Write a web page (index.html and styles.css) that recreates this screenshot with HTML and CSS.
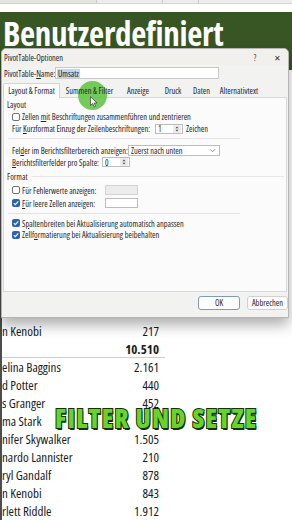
FILE: index.html
```html
<!DOCTYPE html>
<html lang="de">
<head>
<meta charset="utf-8">
<title>PivotTable-Optionen</title>
<link rel="stylesheet" href="styles.css">
</head>
<body>
<div class="screen">
  <div class="colheads">
    <span class="ch ch-a"></span><span class="ch ch-b"></span><span class="ch ch-c"></span><span class="ch ch-d"></span>
  </div>
  <div class="banner"><h1 class="banner-title">Benutzerdefiniert</h1></div>

  <div class="rows">
    <div class="row"><span class="name">n Kenobi</span><span class="num">217</span></div>
    <div class="row total"><span class="name"></span><span class="num">10.510</span></div>
    <div class="row"><span class="name">elina Baggins</span><span class="num">2.161</span></div>
    <div class="row"><span class="name">d Potter</span><span class="num">440</span></div>
    <div class="row"><span class="name">s Granger</span><span class="num">452</span></div>
    <div class="row"><span class="name">ma Stark</span><span class="num"></span></div>
    <div class="row"><span class="name">nifer Skywalker</span><span class="num">1.505</span></div>
    <div class="row"><span class="name">nardo Lannister</span><span class="num">210</span></div>
    <div class="row"><span class="name">ryl Gandalf</span><span class="num">878</span></div>
    <div class="row"><span class="name">n Kenobi</span><span class="num">843</span></div>
    <div class="row"><span class="name">rlett Riddle</span><span class="num">1.912</span></div>
  </div>

  <div class="dialog">
    <div class="titlebar">
      <span class="title">PivotTable-Optionen</span>
      <span class="tb-btn">?</span>
      <span class="tb-btn close">✕</span>
    </div>
    <div class="name-row">
      <span class="name-label">PivotTable-<u>N</u>ame:</span>
      <span class="name-input"><span class="sel">Umsatz</span></span>
    </div>
    <div class="tabs">
      <span class="tab active t1">Layout &amp; Format</span>
      <span class="tab t2">Summen &amp; Filter</span>
      <span class="tab t3">Anzeige</span>
      <span class="tab t4">Druck</span>
      <span class="tab t5">Daten</span>
      <span class="tab t6">Alternativtext</span>
    </div>
    <div class="panel">
      <div class="heading">Layout</div>
      <div class="line cb-row r-merge">
        <span class="cb"></span><span>Zellen <u>m</u>it Beschriftungen zusammenführen und zentrieren</span>
      </div>
      <div class="line r-indent">
        <span class="txt w-indent">Für <u>K</u>urzformat Einzug der Zeilenbeschriftungen:</span>
        <span class="spin"><span class="spin-val">1</span><span class="spin-arrows"><svg viewBox="0 0 8 10" width="8" height="10"><path d="M2 4 L4 2 L6 4 Z M2 6 L4 8 L6 6 Z" fill="#555"/></svg></span></span>
        <span class="after">Zeichen</span>
      </div>
      <div class="sep short s1"></div>
      <div class="line r-felder">
        <span class="txt w-felder">Fel<u>d</u>er im Berichtsfilterbereich anzeigen:</span>
        <span class="select"><span>Zuerst nach unten</span><svg viewBox="0 0 8 6" width="7" height="5"><path d="M1 1.5 L4 4.5 L7 1.5" stroke="#666" stroke-width="0.9" fill="none"/></svg></span>
      </div>
      <div class="line r-bericht">
        <span class="txt w-bericht"><u>B</u>erichtsfilterfelder pro Spalte:</span>
        <span class="spin"><span class="spin-val">0</span><span class="spin-arrows"><svg viewBox="0 0 8 10" width="8" height="10"><path d="M2 4 L4 2 L6 4 Z M2 6 L4 8 L6 6 Z" fill="#555"/></svg></span></span>
      </div>
      <div class="heading fmt"><span>Format</span><span class="hline"></span></div>
      <div class="line cb-row r-fehler">
        <span class="lab w-fmt"><span class="cb"></span><span>Für Fehlerwerte anzei<u>g</u>en:</span></span>
        <span class="field disabled"></span>
      </div>
      <div class="line cb-row r-leer">
        <span class="lab w-fmt"><span class="cb on"><svg viewBox="0 0 8 8" width="8" height="8"><path d="M1.8 4.1 L3.3 5.6 L6.3 2.4" stroke="#fff" stroke-width="1.1" fill="none"/></svg></span><span><u>F</u>ür leere Zellen anzeigen:</span></span>
        <span class="field"></span>
      </div>
      <div class="sep short s3"></div>
      <div class="line cb-row r-spalt">
        <span class="cb on"><svg viewBox="0 0 8 8" width="8" height="8"><path d="M1.8 4.1 L3.3 5.6 L6.3 2.4" stroke="#fff" stroke-width="1.1" fill="none"/></svg></span><span>S<u>p</u>altenbreiten bei Aktualisierung automatisch anpassen</span>
      </div>
      <div class="line cb-row r-zell">
        <span class="cb on"><svg viewBox="0 0 8 8" width="8" height="8"><path d="M1.8 4.1 L3.3 5.6 L6.3 2.4" stroke="#fff" stroke-width="1.1" fill="none"/></svg></span><span>Zellf<u>o</u>rmatierung bei Aktualisierung beibehalten</span>
      </div>
    </div>
    <div class="buttons">
      <span class="btn default">OK</span>
      <span class="btn">Abbrechen</span>
    </div>
  </div>

  <div class="cursor-dot"></div>
  <svg class="pointer" viewBox="0 0 9 13" width="8" height="12"><path d="M0.5 0.5 L0.5 10.5 L3 8.2 L4.8 12 L6.3 11.3 L4.6 7.6 L8 7.6 Z" fill="#fff" stroke="#333" stroke-width="0.8" stroke-linejoin="round"/></svg>

  <div class="caption">FILTER UND SETZE</div>
</div>
</body>
</html>
```

FILE: styles.css
```css
html, body {
  margin: 0;
  padding: 0;
  background: #ffffff;
}

.screen {
  position: relative;
  width: 292px;
  height: 520px;
  overflow: hidden;
  background: #ffffff;
  font-family: "Open Sans", "Noto Sans", sans-serif;
}

/* spreadsheet background */
.colheads {
  display: flex;
  height: 4px;
  margin-bottom: 8px;
  background: #ededed;
  border-bottom: 1px solid #d6d6d6;
  box-sizing: border-box;
}
.ch {
  border-right: 1px solid #c9c9c9;
  height: 100%;
}
.ch-a { width: 96px; background: #e2e6df; }
.ch-b { width: 65px; }
.ch-c { width: 35px; }
.ch-d { flex: 1; border-right: none; }

.banner {
  height: 58px;
  background: #375623;
  overflow: hidden;
}
.banner-title {
  margin: 0;
  padding: 2px 0 0 3px;
  color: #ffffff;
  font-family: "Open Sans", sans-serif;
  font-weight: 700;
  font-size: 33px;
  font-stretch: 75%;
  line-height: 40px;
  letter-spacing: -0.3px;
  white-space: nowrap;
}

.rows {
  padding-top: 252px;
  border-left: 2px solid #4d4d4d;
}
.row {
  display: grid;
  grid-template-columns: 105px 52px;
  width: 163px;
  height: 18px;
  align-items: center;
  box-sizing: border-box;
  font-size: 13px;
  font-stretch: 75%;
  color: #1b1b1b;
  white-space: nowrap;
}
.row .num {
  text-align: right;
}
.row.total {
  border-bottom: 1px solid #bcd2ea;
  font-weight: 700;
}

/* dialog */
.dialog {
  position: absolute;
  left: 1px;
  top: 48px;
  width: 288px;
  height: 270px;
  box-sizing: border-box;
  background: #f2f2f1;
  border: 1px solid #b4b4b4;
  border-radius: 5px 5px 0 0;
  box-shadow: 0 7px 14px rgba(0, 0, 0, 0.32);
  font-size: 8.4px;
  font-stretch: 75%;
  color: #262626;
  white-space: nowrap;
  display: flex;
  flex-direction: column;
}
.titlebar {
  display: flex;
  align-items: center;
  height: 16px;
  padding-left: 2px;
  background: #f1f0ec;
  border-radius: 5px 5px 0 0;
}
.title {
  flex: 1;
}
.tb-btn {
  width: 22px;
  text-align: center;
  font-size: 8px;
  color: #333;
}

.name-row {
  display: flex;
  align-items: center;
  height: 12px;
  margin-top: 2px;
  padding-left: 2px;
}
.name-label {
  width: 51px;
}
.name-input {
  display: flex;
  align-items: center;
  width: 164px;
  height: 12px;
  box-sizing: border-box;
  border: 1px solid #c9c9c9;
  background: #fff;
  padding-left: 1px;
}
.sel {
  background: #bcd8f2;
  color: #1d1d1d;
  padding: 0 1px;
  line-height: 9px;
}

.tabs {
  display: flex;
  align-items: flex-end;
  height: 15px;
  margin-top: 4px;
  padding-left: 1px;
  position: relative;
  z-index: 1;
}
.tab {
  height: 14px;
  line-height: 14px;
  text-align: center;
  box-sizing: border-box;
}
.tab.active {
  height: 15px;
  background: #fbfbfb;
  border: 1px solid #d4d4d4;
  border-bottom: none;
  border-radius: 2px 2px 0 0;
}
.t1 { width: 57px; }
.t2 { width: 59px; }
.t3 { width: 38px; }
.t4 { width: 32px; }
.t5 { width: 25px; }
.t6 { width: 50px; }

.panel {
  height: 195px;
  margin: -1px 1px 0;
  box-sizing: border-box;
  background: #fbfbfb;
  border: 1px solid #d9d9d9;
  padding-left: 8px;
}
.heading {
  height: 13px;
  line-height: 13px;
  margin-left: -5px;
}
.heading.fmt {
  display: flex;
  align-items: center;
  gap: 3px;
  margin-top: 2px;
}
.hline {
  flex: 1;
  border-top: 1px solid #e6e6e6;
  margin-right: 2px;
}
.line {
  display: flex;
  align-items: center;
  height: 12px;
}
.txt {
  display: inline-block;
  flex: none;
}
.lab {
  display: flex;
  align-items: center;
  gap: 1px;
  flex: none;
}
.cb-row {
  gap: 1px;
}
.cb {
  display: inline-flex;
  width: 8px;
  height: 8px;
  box-sizing: border-box;
  border: 1px solid #6f6f6f;
  border-radius: 2px;
  background: #ffffff;
  margin-right: 1px;
  flex: none;
}
.cb.on {
  border: none;
  background: #2a63b3;
}
.r-merge { height: 11px; }
.r-indent { height: 13px; }
.w-indent { width: 143px; }
.w-felder { width: 116px; }
.w-bericht { width: 90px; }
.w-fmt { width: 92px; }

.spin {
  display: flex;
  align-items: center;
  width: 28px;
  height: 10px;
  box-sizing: border-box;
  border: 1px solid #bcbcbc;
  background: #fff;
}
.spin-val {
  flex: 1;
  padding-left: 2px;
}
.spin-arrows {
  display: flex;
  width: 8px;
  height: 8px;
  background: #ececec;
  margin-right: 1px;
}
.spin-arrows svg {
  width: 8px;
  height: 8px;
}
.after {
  margin-left: 3px;
}

.sep {
  border-top: 1px solid #e4e4e4;
}
.sep.short {
  width: 232px;
  margin-left: -4px;
}
.s1 {
  margin-top: 3px;
  margin-bottom: 5px;
}
.select {
  display: flex;
  align-items: center;
  justify-content: space-between;
  width: 92px;
  height: 11px;
  box-sizing: border-box;
  border: 1px solid #bcbcbc;
  background: #fff;
  padding: 0 3px 0 2px;
}

.field {
  width: 33px;
  height: 10px;
  box-sizing: border-box;
  border: 1px solid #bcbcbc;
  background: #ffffff;
}
.field.disabled {
  background: #ececec;
  border-color: #d3d3d3;
}
.r-fehler { margin-top: 1px; }
.r-leer { margin-top: 1px; }
.s3 {
  margin-top: 4px;
  margin-bottom: 3px;
}
.r-zell { height: 11px; }

.buttons {
  display: flex;
  justify-content: flex-end;
  gap: 7px;
  margin-top: 4px;
}
.btn {
  width: 41px;
  height: 14px;
  line-height: 12px;
  box-sizing: border-box;
  text-align: center;
  background: #fdfdfd;
  border: 1px solid #d0d0d0;
  border-radius: 3px;
}
.btn.default {
  width: 42px;
  border-color: #7e9cb8;
}

/* overlays */
.cursor-dot {
  position: absolute;
  left: 78px;
  top: 81px;
  width: 29px;
  height: 29px;
  border-radius: 50%;
  background: rgba(96, 196, 70, 0.88);
}
.pointer {
  position: absolute;
  left: 90px;
  top: 96px;
}
.caption {
  position: absolute;
  left: 55px;
  top: 407px;
  font-family: "Open Sans", sans-serif;
  font-weight: 800;
  font-size: 26px;
  font-stretch: 75%;
  line-height: 22px;
  color: #66d52a;
  -webkit-text-stroke: 2px #17300b;
  paint-order: stroke fill;
  text-shadow: 1px 1.5px 0 #17300b;
  white-space: nowrap;
  letter-spacing: 1.2px;
}
```
